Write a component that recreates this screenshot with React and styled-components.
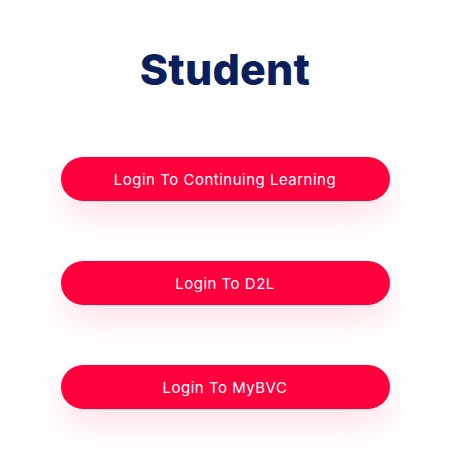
import styled, { createGlobalStyle } from 'styled-components';

const GlobalStyle = createGlobalStyle`
  html, body {
    margin: 0;
    padding: 0;
    background: #ffffff;
  }
`;

const Page = styled.div`
  width: 450px;
  height: 457px;
  display: flex;
  flex-direction: column;
  align-items: center;
  font-family: Inter, 'Noto Sans', sans-serif;
  overflow: hidden;
`;

const Title = styled.h1`
  margin: 44px 0 0;
  font-size: 43px;
  line-height: 50px;
  font-weight: 800;
  color: #0c1f5c;
  letter-spacing: 0.2px;
`;

const Buttons = styled.div`
  margin-top: 63px;
  display: flex;
  flex-direction: column;
  gap: 60px;
`;

const LoginButton = styled.a`
  width: 329px;
  height: 44px;
  border-radius: 22px;
  background: #ff003c;
  color: #ffffff;
  display: flex;
  align-items: center;
  justify-content: center;
  font-size: 15px;
  font-weight: 400;
  letter-spacing: 0.5px;
  text-decoration: none;
  box-shadow: 0 14px 34px rgba(255, 0, 60, 0.13);
  cursor: pointer;
`;

const links = ['Login To Continuing Learning', 'Login To D2L', 'Login To MyBVC'];

export default function App() {
  return (
    <>
      <GlobalStyle />
      <Page>
        <Title>Student</Title>
        <Buttons>
          {links.map((label) => (
            <LoginButton key={label}>{label}</LoginButton>
          ))}
        </Buttons>
      </Page>
    </>
  );
}
